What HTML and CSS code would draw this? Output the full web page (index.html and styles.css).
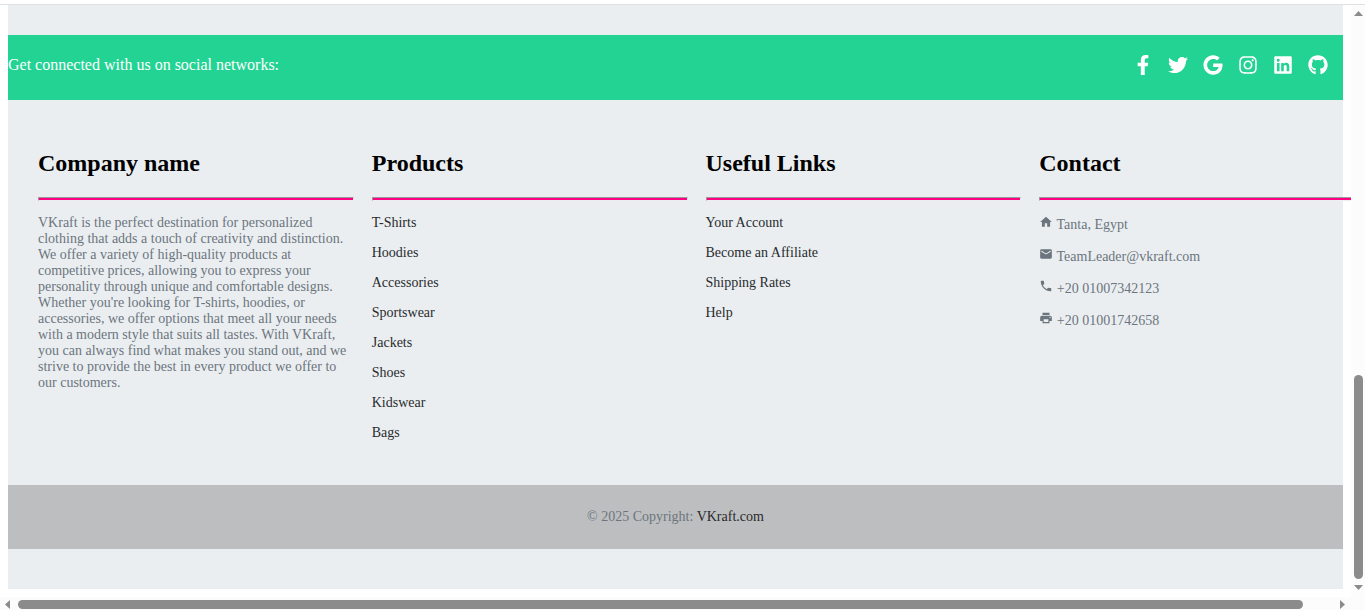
FILE: index.html
```html
<!DOCTYPE html>
<html lang="en">
<head>
<meta charset="utf-8">
<title>VKraft</title>
<link rel="stylesheet" href="styles.css">
</head>
<body>
<div class="window">
  <div class="page">
    <footer class="footer">
      <section class="social">
        <span>Get connected with us on social networks:</span>
        <nav class="social-links">
          <a href="#" aria-label="Facebook"><svg viewBox="0 0 320 512"><path d="M279.14 288l14.22-92.66h-88.91v-60.13c0-25.35 12.42-50.06 52.24-50.06h40.42V6.26S260.43 0 225.36 0c-73.22 0-121.08 44.38-121.08 124.72v70.62H22.89V288h81.39v224h100.17V288z"/></svg></a>
          <a href="#" aria-label="Twitter"><svg viewBox="0 0 512 512"><path d="M459.37 151.716c.325 4.548.325 9.097.325 13.645 0 138.72-105.583 298.558-298.558 298.558-59.452 0-114.68-17.219-161.137-47.106 8.447.974 16.568 1.299 25.34 1.299 49.055 0 94.213-16.568 130.274-44.832-46.132-.975-84.792-31.188-98.112-72.772 6.498.974 12.995 1.624 19.818 1.624 9.421 0 18.843-1.3 27.614-3.573-48.081-9.747-84.143-51.98-84.143-102.985v-1.299c13.969 7.797 30.214 12.67 47.431 13.319-28.264-18.843-46.781-51.005-46.781-87.391 0-19.492 5.197-37.36 14.294-52.954 51.655 63.675 129.3 105.258 216.365 109.807-1.624-7.797-2.599-15.918-2.599-24.04 0-57.828 46.782-104.934 104.934-104.934 30.213 0 57.502 12.67 76.67 33.137 23.715-4.548 46.456-13.32 66.599-25.34-7.798 24.366-24.366 44.833-46.132 57.827 21.117-2.273 41.584-8.122 60.426-16.243-14.292 20.791-32.161 39.308-52.628 54.253z"/></svg></a>
          <a href="#" aria-label="Google"><svg viewBox="0 0 488 512"><path d="M488 261.8C488 403.3 391.1 504 248 504 110.8 504 0 393.2 0 256S110.8 8 248 8c66.8 0 123 24.5 166.3 64.9l-67.5 64.9C258.5 52.6 94.3 116.6 94.3 256c0 86.5 69.1 156.6 153.7 156.6 98.2 0 135-70.4 140.8-106.9H248v-85.3h236.1c2.3 12.7 3.9 24.9 3.9 41.4z"/></svg></a>
          <a href="#" aria-label="Instagram"><svg viewBox="0 0 448 512"><path d="M224.1 141c-63.6 0-114.9 51.3-114.9 114.9s51.3 114.9 114.9 114.9S339 319.5 339 255.9 287.7 141 224.1 141zm0 189.6c-41.1 0-74.7-33.5-74.7-74.7s33.5-74.7 74.7-74.7 74.7 33.5 74.7 74.7-33.6 74.7-74.7 74.7zm146.4-194.3c0 14.9-12 26.8-26.8 26.8-14.9 0-26.8-12-26.8-26.8s12-26.8 26.8-26.8 26.8 12 26.8 26.8zm76.1 27.2c-1.7-35.9-9.9-67.7-36.2-93.9-26.2-26.2-58-34.4-93.9-36.2-37-2.1-147.9-2.1-184.9 0-35.8 1.7-67.6 9.9-93.9 36.1s-34.4 58-36.2 93.9c-2.1 37-2.1 147.9 0 184.9 1.7 35.9 9.9 67.7 36.2 93.9s58 34.4 93.9 36.2c37 2.1 147.9 2.1 184.9 0 35.9-1.7 67.7-9.9 93.9-36.2 26.2-26.2 34.4-58 36.2-93.9 2.1-37 2.1-147.8 0-184.8zM398.8 388c-7.8 19.6-22.9 34.7-42.6 42.6-29.5 11.7-99.5 9-132.1 9s-102.7 2.6-132.1-9c-19.6-7.8-34.7-22.9-42.6-42.6-11.7-29.5-9-99.5-9-132.1s-2.6-102.7 9-132.1c7.8-19.6 22.9-34.7 42.6-42.6 29.5-11.7 99.5-9 132.1-9s102.7-2.6 132.1 9c19.6 7.8 34.7 22.9 42.6 42.6 11.7 29.5 9 99.5 9 132.1s2.7 102.7-9 132.1z"/></svg></a>
          <a href="#" aria-label="LinkedIn"><svg viewBox="0 0 448 512"><path d="M416 32H31.9C14.3 32 0 46.5 0 64.3v383.4C0 465.5 14.3 480 31.9 480H416c17.6 0 32-14.5 32-32.3V64.3c0-17.8-14.4-32.3-32-32.3zM135.4 416H69V202.2h66.5V416zm-33.2-243c-21.3 0-38.5-17.3-38.5-38.5S80.9 96 102.2 96c21.2 0 38.5 17.3 38.5 38.5 0 21.3-17.2 38.5-38.5 38.5zm282.1 243h-66.4V312c0-24.8-.5-56.7-34.5-56.7-34.6 0-39.9 27-39.9 54.9V416h-66.4V202.2h63.7v29.2h.9c8.9-16.8 30.6-34.5 62.9-34.5 67.2 0 79.7 44.3 79.7 101.9V416z"/></svg></a>
          <a href="#" aria-label="GitHub"><svg viewBox="0 0 496 512"><path d="M244.8 8C106.1 8 0 113.3 0 252c0 110.9 69.8 205.8 169.5 239.2 12.8 2.3 17.3-5.6 17.3-12.1 0-6.2-.3-40.4-.3-61.4 0 0-70 15-84.7-29.8 0 0-11.4-29.1-27.8-36.6 0 0-22.9-15.7 1.6-15.4 0 0 24.9 2 38.6 25.8 21.9 38.6 58.6 27.5 72.9 20.9 2.3-16 8.8-27.1 16-33.7-55.9-6.2-112.3-14.3-112.3-110.5 0-27.5 7.6-41.3 23.6-58.9-2.6-6.5-11.1-33.3 2.6-67.9 20.9-6.5 69 27 69 27 20-5.6 41.5-8.5 62.8-8.5s42.8 2.9 62.8 8.5c0 0 48.1-33.6 69-27 13.7 34.7 5.2 61.4 2.6 67.9 16 17.7 25.8 31.5 25.8 58.9 0 96.5-58.9 104.2-114.8 110.5 9.2 7.9 17 22.9 17 46.4 0 33.7-.3 75.4-.3 83.6 0 6.5 4.6 14.4 17.3 12.1C428.2 457.8 496 362.9 496 252 496 113.3 383.5 8 244.8 8z"/></svg></a>
        </nav>
      </section>

      <section class="columns">
        <div class="column">
          <h2>Company name</h2>
          <hr>
          <p>VKraft is the perfect destination for personalized clothing that adds a touch of creativity and distinction. We offer a variety of high-quality products at competitive prices, allowing you to express your personality through unique and comfortable designs. Whether you're looking for T-shirts, hoodies, or accessories, we offer options that meet all your needs with a modern style that suits all tastes. With VKraft, you can always find what makes you stand out, and we strive to provide the best in every product we offer to our customers.</p>
        </div>
        <div class="column">
          <h2>Products</h2>
          <hr>
          <p><a href="#">T-Shirts</a></p>
          <p><a href="#">Hoodies</a></p>
          <p><a href="#">Accessories</a></p>
          <p><a href="#">Sportswear</a></p>
          <p><a href="#">Jackets</a></p>
          <p><a href="#">Shoes</a></p>
          <p><a href="#">Kidswear</a></p>
          <p><a href="#">Bags</a></p>
        </div>
        <div class="column">
          <h2>Useful Links</h2>
          <hr>
          <p><a href="#">Your Account</a></p>
          <p><a href="#">Become an Affiliate</a></p>
          <p><a href="#">Shipping Rates</a></p>
          <p><a href="#">Help</a></p>
        </div>
        <div class="column">
          <h2>Contact</h2>
          <hr>
          <p class="contact"><svg viewBox="0 0 24 24"><path d="M10 20v-6h4v6h5v-8h3L12 3 2 12h3v8z"/></svg> Tanta, Egypt</p>
          <p class="contact"><svg viewBox="0 0 24 24"><path d="M20 4H4c-1.1 0-1.99.9-1.99 2L2 18c0 1.1.9 2 2 2h16c1.1 0 2-.9 2-2V6c0-1.1-.9-2-2-2zm0 4l-8 5-8-5V6l8 5 8-5v2z"/></svg> TeamLeader@vkraft.com</p>
          <p class="contact"><svg viewBox="0 0 24 24"><path d="M6.62 10.79c1.44 2.83 3.76 5.14 6.59 6.59l2.2-2.2c.27-.27.67-.36 1.02-.24 1.12.37 2.33.57 3.57.57.55 0 1 .45 1 1V20c0 .55-.45 1-1 1-9.39 0-17-7.61-17-17 0-.55.45-1 1-1h3.5c.55 0 1 .45 1 1 0 1.25.2 2.45.57 3.57.11.35.03.74-.25 1.02l-2.2 2.2z"/></svg> +20 01007342123</p>
          <p class="contact"><svg viewBox="0 0 24 24"><path d="M19 8H5c-1.66 0-3 1.34-3 3v6h4v4h12v-4h4v-6c0-1.66-1.34-3-3-3zm-3 11H8v-5h8v5zm3-7c-.55 0-1-.45-1-1s.45-1 1-1 1 .45 1 1-.45 1-1 1zm-1-9H6v4h12V3z"/></svg> +20 01001742658</p>
        </div>
      </section>

      <div class="copyright">© 2025 Copyright: <a href="#">VKraft.com</a></div>
    </footer>
  </div>

  <div class="scroll scroll-y" aria-hidden="true">
    <svg class="arrow-y" viewBox="0 0 9 5"><path d="M4.500 0L9 5H0z"/></svg>
    <div class="space-before"></div>
    <div class="thumb"></div>
    <svg class="arrow-y" viewBox="0 0 9 5"><path d="M0 0h9L4.500 5z"/></svg>
  </div>
  <div class="scroll scroll-x" aria-hidden="true">
    <svg class="arrow-x" viewBox="0 0 5 9"><path d="M0 4.500L5 0v9z"/></svg>
    <div class="thumb"></div>
    <div class="space-after"></div>
    <svg class="arrow-x" viewBox="0 0 5 9"><path d="M0 0l5 4.500L0 9z"/></svg>
  </div>
</div>
</body>
</html>
```
FILE: styles.css
```css
* {
  box-sizing: border-box;
}

body {
  margin: 0;
  background: #fff;
  color: #6c757d;
  font-family: "Liberation Serif", "Times New Roman", serif;
  font-size: 14px;
  line-height: 16px;
}

a {
  color: #292b2c;
  text-decoration: none;
}

.window {
  display: grid;
  grid-template-columns: minmax(0, 1fr) 14px;
  grid-template-rows: minmax(0, 1fr) 13px;
  height: 100vh;
  padding-top: 4px;
}

.page {
  overflow: hidden;
  padding: 0 8px 8px;
  border-top: 1px solid #e1e1e1;
}

.footer {
  padding: 30px 0 40px;
  background: #eaeef1;
}

.social {
  display: flex;
  justify-content: space-between;
  padding: 20px 15px 25px 0;
  background: #22d393;
  color: #fff;
  font-size: 16px;
  line-height: 20px;
}

.social-links {
  display: flex;
  gap: 15px;
}

.social-links svg {
  display: block;
  width: 20px;
  height: 20px;
  fill: #fff;
}

/* The row keeps the full footer width, so its last column runs past the edge. */
.columns {
  display: grid;
  grid-template-columns: repeat(4, minmax(0, 1fr));
  width: 100%;
  margin-left: 30px;
  padding: 50px 0 30px;
}

.column {
  padding-right: 18px;
}

.column h2 {
  margin: 0 0 20px;
  color: #000;
  font-size: 24px;
  line-height: 27px;
}

.column hr {
  height: 4px;
  margin: 0 0 14px;
  border: 1px solid;
  border-color: #9a9a9a #eee #eee #9a9a9a;
  background: #ff0084;
}

.column p {
  margin: 0 0 14px;
}

.contact svg {
  width: 14px;
  height: 14px;
  fill: currentColor;
}

.copyright {
  padding: 24px;
  background: #bdbec0;
  text-align: center;
}

.scroll {
  display: flex;
  align-items: center;
  background: #fcfcfc;
}

.scroll svg {
  flex: none;
  fill: #8b8b8b;
}

.scroll-y {
  flex-direction: column;
  padding: 6px 0 7px;
  border-top: 1px solid #e1e1e1;
}

.scroll-x {
  grid-column: 1 / -1;
  padding: 1px 20px 0 5px;
}

.arrow-y {
  width: 9px;
  height: 5px;
}

.arrow-x {
  width: 5px;
  height: 9px;
}

.thumb {
  border-radius: 5px;
  background: #8b8b8b;
}

.scroll-y .thumb {
  flex: 204;
  width: 9px;
  margin-bottom: 6px;
}

.scroll-x .thumb {
  flex: 1285;
  height: 9px;
  margin-left: 8px;
}

.space-before {
  flex: 359;
}

.space-after {
  flex: 37;
}
```
